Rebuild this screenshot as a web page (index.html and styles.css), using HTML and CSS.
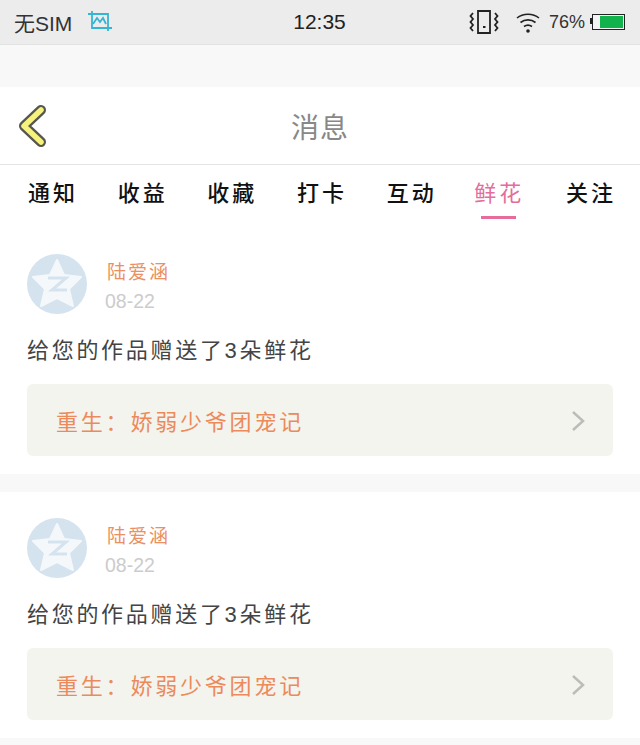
FILE: index.html
```html
<!DOCTYPE html>
<html lang="zh">
<head>
  <meta charset="UTF-8">
  <meta name="viewport" content="width=device-width, initial-scale=1.0">
  <title>消息</title>
  <link rel="stylesheet" href="styles.css">
</head>
<body>
  <div class="status-bar">
    <div class="status-left">
      <span>无SIM</span>
      <svg class="crop-icon" width="26" height="22" viewBox="0 0 26 22" fill="none" stroke="#35b4d4" stroke-width="1.800">
        <path d="M1 3H21V20M5 0V17H25"/>
        <path d="M6 13L10 7L13 11L16 7L19 13"/>
      </svg>
    </div>
    <div class="status-time">12:35</div>
    <div class="status-right">
      <svg class="vibrate-icon" width="30" height="24" viewBox="0 0 30 24" fill="none" stroke="#222">
        <path d="M9 1H21V23H9Z" stroke-width="1.800"/>
        <path d="M14 17H16.500" stroke-width="2"/>
        <path d="M4 3L1.500 6L4 9L1.500 12L4 15L1.500 18L4 21M26 3L28.500 6L26 9L28.500 12L26 15L28.500 18L26 21" stroke-width="1.800"/>
      </svg>
      <svg class="wifi-icon" width="24" height="21" viewBox="0 0 24 21" fill="none" stroke="#222" stroke-width="1.600">
        <path d="M1 6C7 1 17 1 23 6M4.500 10.500C9 7 15 7 19.500 10.500M8 14.500C10.500 12.800 13.500 12.800 16 14.500"/>
        <circle cx="12" cy="19" r="1.800" fill="#222" stroke="none"/>
      </svg>
      <span class="battery-text">76%</span>
      <div class="battery">
        <div class="battery-level"></div>
      </div>
    </div>
  </div>
  <div class="top-band"></div>

  <header class="title-bar">
    <svg class="back-icon" width="30" height="44" viewBox="0 0 30 44" fill="none" stroke-linecap="round" stroke-linejoin="round">
      <path d="M24 7L7 23L24 39" stroke="#565650" stroke-width="10"/>
      <path d="M24 7L7 23L24 39" stroke="#f6f27c" stroke-width="5.500"/>
    </svg>
    <h1>消息</h1>
  </header>

  <nav class="tabs">
    <a>通知</a>
    <a>收益</a>
    <a>收藏</a>
    <a>打卡</a>
    <a>互动</a>
    <a class="active">鲜花</a>
    <a>关注</a>
  </nav>

  <section class="card">
    <div class="user-row">
      <svg class="avatar" width="60" height="60" viewBox="0 0 60 60">
        <circle cx="30" cy="30" r="30" fill="#d5e3ef"/>
        <path d="M30 6L37 21L54 23L42 35L46 52L30 44L14 52L18 35L6 23L23 21Z" fill="#f4f8fb" stroke="#f4f8fb" stroke-width="2" stroke-linejoin="round"/>
        <path d="M21 24H39L25 36H40" fill="none" stroke="#d5e3ef" stroke-width="3"/>
      </svg>
      <div class="user-info">
        <div class="user-name">陆爱涵</div>
        <div class="user-date">08-22</div>
      </div>
    </div>
    <p class="message">给您的作品赠送了3朵鲜花</p>
    <div class="book-link">
      <span>重生：娇弱少爷团宠记</span>
      <svg class="book-arrow" width="14" height="22" viewBox="0 0 14 22" fill="none" stroke="#bcbdb9" stroke-width="2.500">
        <path d="M2 2L12 11L2 20"/>
      </svg>
    </div>
  </section>

  <section class="card">
    <div class="user-row">
      <svg class="avatar" width="60" height="60" viewBox="0 0 60 60">
        <circle cx="30" cy="30" r="30" fill="#d5e3ef"/>
        <path d="M30 6L37 21L54 23L42 35L46 52L30 44L14 52L18 35L6 23L23 21Z" fill="#f4f8fb" stroke="#f4f8fb" stroke-width="2" stroke-linejoin="round"/>
        <path d="M21 24H39L25 36H40" fill="none" stroke="#d5e3ef" stroke-width="3"/>
      </svg>
      <div class="user-info">
        <div class="user-name">陆爱涵</div>
        <div class="user-date">08-22</div>
      </div>
    </div>
    <p class="message">给您的作品赠送了3朵鲜花</p>
    <div class="book-link">
      <span>重生：娇弱少爷团宠记</span>
      <svg class="book-arrow" width="14" height="22" viewBox="0 0 14 22" fill="none" stroke="#bcbdb9" stroke-width="2.500">
        <path d="M2 2L12 11L2 20"/>
      </svg>
    </div>
  </section>
</body>
</html>
```

FILE: styles.css
```css
body {
  font-family: "Liberation Sans", "Noto Sans CJK SC", sans-serif;
  margin: 0;
  padding: 0;
  height: 745px;
  overflow: hidden;
  background-color: #f8f8f8;
}
.status-bar {
  height: 45px;
  padding: 0 15px 0 14px;
  display: grid;
  grid-template-columns: 1fr auto 1fr;
  align-items: center;
  background-color: #ececec;
  border-bottom: 1px solid #e2e2e2;
  box-sizing: border-box;
  color: #333;
  font-size: 21px;
}
.status-left {
  display: flex;
  align-items: center;
  gap: 15px;
}
.status-time {
  font-size: 21px;
  color: #222;
}
.status-right {
  display: flex;
  align-items: center;
  justify-content: flex-end;
}
.wifi-icon {
  margin-left: 17px;
}
.battery-text {
  margin-left: 9px;
  font-size: 18px;
}
.battery {
  position: relative;
  width: 29px;
  height: 12px;
  margin-left: 7px;
  padding: 1px;
  border: 1px solid #222;
  display: flex;
  justify-content: flex-end;
  background-color: #f4f4f4;
}
/* battery nib on the left side */
.battery::before {
  content: "";
  position: absolute;
  left: -3px;
  top: 3px;
  width: 2px;
  height: 6px;
  background-color: #222;
}
.battery-level {
  width: 80%;
  background-color: #12b24c;
}
.top-band {
  height: 42px;
}
.title-bar {
  height: 78px;
  padding-top: 1px;
  position: relative;
  display: flex;
  align-items: center;
  justify-content: center;
  background: white;
  border-bottom: 1px solid #e4e4e4;
  box-sizing: border-box;
}
.back-icon {
  position: absolute;
  left: 17px;
  top: 16px;
}
h1 {
  margin: 0;
  font-size: 28px;
  font-weight: 400;
  letter-spacing: 1px;
  color: #888;
}
.tabs {
  height: 63px;
  padding: 0 27px 0 28px;
  display: flex;
  justify-content: space-between;
  background: white;
  box-sizing: border-box;
}
.tabs a {
  position: relative;
  padding-top: 12px;
  font-size: 22px;
  font-weight: 500;
  line-height: 34px;
  letter-spacing: 3px;
  margin-right: -3px;
  color: #111;
}
.tabs a.active {
  color: #e56c9b;
  font-weight: 400;
  left: -2px;
}
.tabs a.active::after {
  content: "";
  position: absolute;
  left: 7px;
  top: 51px;
  width: 35px;
  height: 3px;
  background-color: #e56c9b;
}
.card {
  height: 246px;
  margin-bottom: 18px;
  padding: 26px 27px 18px;
  background: white;
  box-sizing: border-box;
}
.user-row {
  display: flex;
  gap: 18px;
}
.avatar {
  flex-shrink: 0;
}
.user-info {
  padding-top: 7px;
}
.user-name {
  margin-left: 2px;
  font-size: 19px;
  line-height: 24px;
  letter-spacing: 2px;
  color: #ec8f63;
}
.user-date {
  margin-top: 4px;
  font-size: 19.500px;
  line-height: 24px;
  color: #ccc;
}
.message {
  margin: 22px 0 18px;
  font-size: 22px;
  line-height: 30px;
  letter-spacing: 2.700px;
  color: #444;
}
.book-link {
  height: 72px;
  padding: 0 28px 0 29px;
  display: flex;
  align-items: center;
  justify-content: space-between;
  background-color: #f3f4ee;
  border-radius: 6px;
  font-size: 22px;
  letter-spacing: 2.800px;
  color: #ec8a5c;
}
.book-arrow {
  margin-top: 2px;
}
```
